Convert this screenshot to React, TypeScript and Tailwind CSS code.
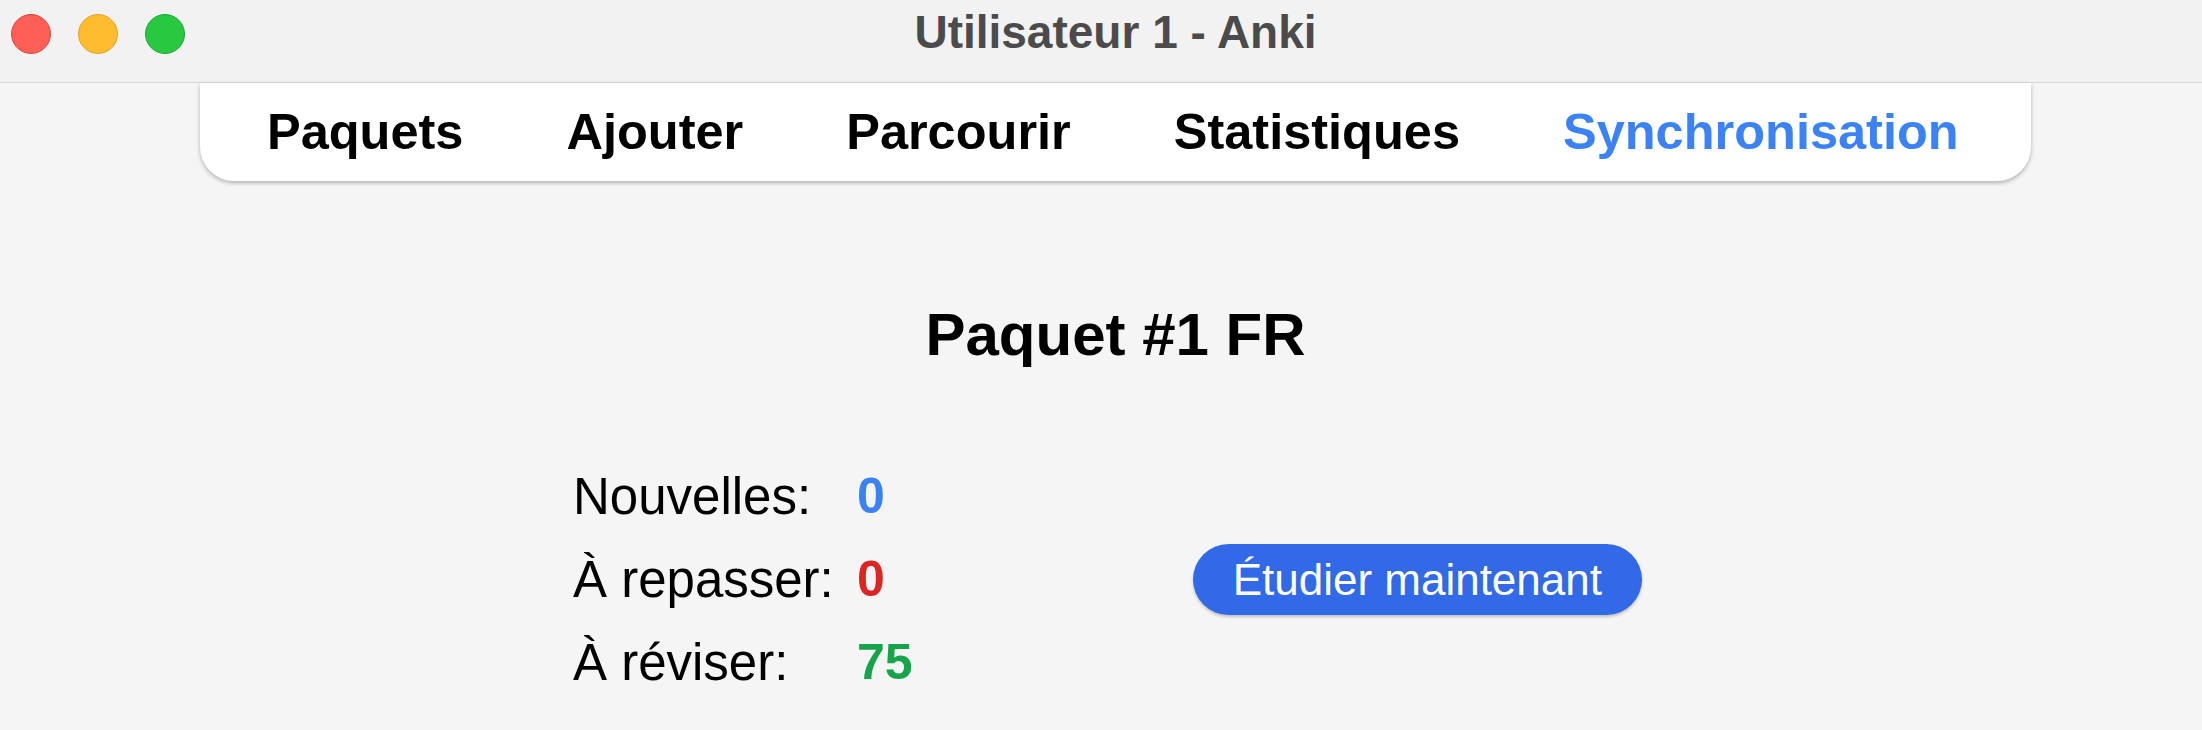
const tabs = ['Paquets', 'Ajouter', 'Parcourir', 'Statistiques', 'Synchronisation'];

function TrafficLights() {
  return (
    <div className="flex w-[200px] shrink-0 gap-[27px] pl-[11px] pt-[14px]">
      <span className="h-[40px] w-[40px] rounded-full border border-[#e2463f] bg-[#ff5f57]" />
      <span className="h-[40px] w-[40px] rounded-full border border-[#e1a325] bg-[#febc2e]" />
      <span className="h-[40px] w-[40px] rounded-full border border-[#1ea833] bg-[#28c840]" />
    </div>
  );
}

function StatRow({ label, value, tone }: { label: string; value: string; tone: string }) {
  return (
    <>
      <span className="text-[51px] font-normal text-black">{label}</span>
      <span className={`text-[50px] font-bold ${tone}`}>{value}</span>
    </>
  );
}

export default function App() {
  return (
    <div className="h-[730px] w-[2202px] overflow-hidden bg-[#f5f5f5] font-['Liberation_Sans',Arial,sans-serif]">
      <header className="flex h-[83px] border-b border-[#d8d8d8] bg-[#f2f2f2]">
        <TrafficLights />
        <div className="w-[1831px] pt-[9px] text-center text-[46px] font-bold leading-none text-[#4b4b4b]">
          Utilisateur 1 - Anki
        </div>
      </header>

      <div className="ml-[200px] w-[1831px]">
        <nav className="flex h-[98px] items-center gap-[103px] rounded-b-[34px] bg-white px-[67px] text-[50.5px] font-bold leading-none text-black shadow-[0_2px_4px_rgba(0,0,0,0.28)]">
          {tabs.map((tab) => (
            <span key={tab} className={tab === 'Synchronisation' ? 'text-[#3b82f6]' : ''}>
              {tab}
            </span>
          ))}
        </nav>

        <h1 className="mt-[124px] text-center text-[60px] font-bold leading-none text-black">Paquet #1 FR</h1>

        <div className="mt-[90px] flex items-center pl-[373px]">
          <div className="grid grid-cols-[284px_auto] leading-[83px]">
            <StatRow label="Nouvelles:" value="0" tone="text-[#3b82f6]" />
            <StatRow label="À repasser:" value="0" tone="text-[#dc2626]" />
            <StatRow label="À réviser:" value="75" tone="text-[#16a34a]" />
          </div>
          <button
            type="button"
            className="ml-[280px] flex h-[71px] items-center rounded-full bg-[#3169e6] px-[40px] text-[44px] leading-none text-white shadow-[0_2px_3px_rgba(0,0,0,0.22)]"
          >
            Étudier maintenant
          </button>
        </div>
      </div>
    </div>
  );
}
